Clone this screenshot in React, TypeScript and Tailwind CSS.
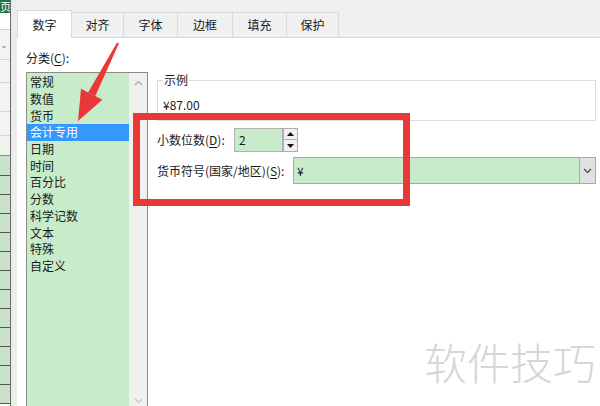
import React from "react";

const items = ["常规", "数值", "货币", "会计专用", "日期", "时间", "百分比", "分数", "科学记数", "文本", "特殊", "自定义"];
const tabs: [string, string][] = [
  ["数字", "w-[55px]"],
  ["对齐", "w-[52px]"],
  ["字体", "w-[54px]"],
  ["边框", "w-[55px]"],
  ["填充", "w-[54px]"],
  ["保护", "w-[52px]"],
];

function LeftStrip() {
  const greenRows = Array.from({ length: 12 });
  return (
    <div className="w-[17px] h-full flex shrink-0">
      <div className="w-[10px] h-full flex flex-col overflow-hidden">
        <div className="h-[13px] bg-[#217346] text-white text-[11px] leading-[13px] whitespace-nowrap overflow-hidden">页</div>
        <div className="h-[17px] bg-white border-b border-[#d4d4d4]" />
        <div className="h-[30px] bg-[#f3f3f3] border-b border-[#d4d4d4] flex items-center text-[9px] text-[#777] leading-none">⌄</div>
        <div className="h-[23px] bg-[#f3f3f3] border-b border-[#d4d4d4]" />
        <div className="h-[29px] bg-[#f3f3f3] border-b border-[#d4d4d4]" />
        <div className="h-[24px] bg-[#f3f3f3] border-b border-[#d4d4d4]" />
        <div className="h-[20px] bg-[#eef3ee] border-b border-[#8a8a8a]" />
        <div className="h-[20px] bg-[#c9e2c9] border-b border-[#555]" />
        {greenRows.map((_, i) => (
          <div key={i} className="h-[19px] shrink-0 bg-[#c9e2c9] border-b border-[#555]" />
        ))}
      </div>
      <div className="w-px h-full bg-[#6a6a6a]" />
      <div className="w-[6px] h-full bg-[#ececec]" />
    </div>
  );
}

function Chevron({ up, className }: { up?: boolean; className?: string }) {
  return (
    <svg width="9" height="6" viewBox="0 0 9 6" className={className}>
      <path d={up ? "M1 5 L4.5 1.5 L8 5" : "M1 1 L4.5 4.5 L8 1"} fill="none" stroke="currentColor" strokeWidth="1.2" />
    </svg>
  );
}

function U({ c }: { c: string }) {
  return <span className="underline underline-offset-2">{c}</span>;
}

export default function App() {
  return (
    <div className="w-[600px] h-[406px] bg-white flex overflow-hidden relative text-[12px] text-[#1a1a1a] font-['Noto_Sans_CJK_SC','Noto_Sans',sans-serif]">
      <LeftStrip />
      <div className="flex-1 flex flex-col h-full">
        <div className="h-[38px] bg-[#f0f0f0] border-b border-[#d9d9d9] flex items-end shrink-0">
          {tabs.map(([t, w], i) =>
            i === 0 ? (
              <div key={t} className={`${w} h-[28px] -mb-px bg-white border-l border-t border-r border-[#d9d9d9] flex items-center justify-center leading-none`}>
                {t}
              </div>
            ) : (
              <div key={t} className={`${w} h-[25px] border-t border-r border-[#d9d9d9] flex items-center justify-center leading-none`}>
                {t}
              </div>
            )
          )}
        </div>
        <div className="flex-1 flex min-h-0">
          <div className="w-[131px] pl-[9px] flex flex-col shrink-0">
            <div className="pt-[12px] leading-[16px]">
              分类(<U c="C" />):
            </div>
            <div className="mt-[6px] flex-1 flex border-l border-t border-r border-[#8c8c8c]">
              <div className="w-[102px] bg-[#c8ecca] pt-px flex flex-col">
                {items.map((it, i) => (
                  <div
                    key={it}
                    className={`h-[16.7px] shrink-0 pl-[3px] flex items-center leading-none ${i === 3 ? "bg-[#3399ff] text-white" : ""}`}
                  >
                    {it}
                  </div>
                ))}
              </div>
              <div className="flex-1 bg-[#f0f0f0] flex flex-col items-center justify-between pt-[7px] pb-[2px]">
                <Chevron up className="text-[#a6a6a6]" />
                <Chevron className="text-[#c4c4c4]" />
              </div>
            </div>
          </div>
          <div className="flex-1 flex flex-col">
            <fieldset className="mt-[34px] ml-[9px] mr-[4px] border border-[#dcdcdc] px-[5px] pb-[7px]">
              <legend className="px-px leading-[16px]">示例</legend>
              <div className="pt-[9px] leading-[16px]">¥87.00</div>
            </fieldset>
            <div className="mt-[7px] ml-[9px] h-[24px] flex items-center">
              <div className="w-[77px] leading-none">
                小数位数(<U c="D" />):
              </div>
              <div className="h-[24px] w-[49px] bg-[#c8ecca] border border-[#b0b0b0] flex items-center pl-[4px] leading-none">2</div>
              <div className="h-[24px] w-[15px] flex flex-col">
                <div className="h-[12px] bg-[#f0f0f0] border border-[#b0b0b0] flex items-center justify-center">
                  <svg width="7" height="4" viewBox="0 0 7 4"><path d="M0 4 L3.5 0 L7 4Z" fill="#111" /></svg>
                </div>
                <div className="h-[12px] bg-[#f0f0f0] border border-t-0 border-[#b0b0b0] flex items-center justify-center">
                  <svg width="7" height="4" viewBox="0 0 7 4"><path d="M0 0 L3.5 4 L7 0Z" fill="#111" /></svg>
                </div>
              </div>
            </div>
            <div className="mt-[5px] ml-[9px] mr-[4px] h-[27px] flex items-center">
              <div className="w-[136px] leading-none whitespace-nowrap">
                货币符号(国家/地区)(<U c="S" />):
              </div>
              <div className="flex-1 h-[27px] flex border border-[#a8a8a8]">
                <div className="flex-1 bg-[#c8ecca] flex items-center pl-[3px] leading-none">¥</div>
                <div className="w-[16px] bg-[#e1e1e1] border-l border-[#a8a8a8] flex items-center justify-center text-[#444]">
                  <Chevron />
                </div>
              </div>
            </div>
          </div>
        </div>
      </div>

      <div className="absolute left-[133px] top-[113px] w-[277px] h-[93px] border-[7px] border-[#ea3838]" />
      <svg className="absolute left-0 top-0" width="600" height="406" viewBox="0 0 600 406">
        <polygon points="117.1,42.5 118.9,43.5 95.3,96.1 88.1,92.5" fill="#ea3838" />
        <polygon points="81,88.8 102.4,99.8 78,121" fill="#ea3838" />
      </svg>
      <div className="absolute left-[424px] top-[331px] text-[43px] leading-[60px] font-light text-[#d6d6d6] whitespace-nowrap">软件技巧</div>
    </div>
  );
}
